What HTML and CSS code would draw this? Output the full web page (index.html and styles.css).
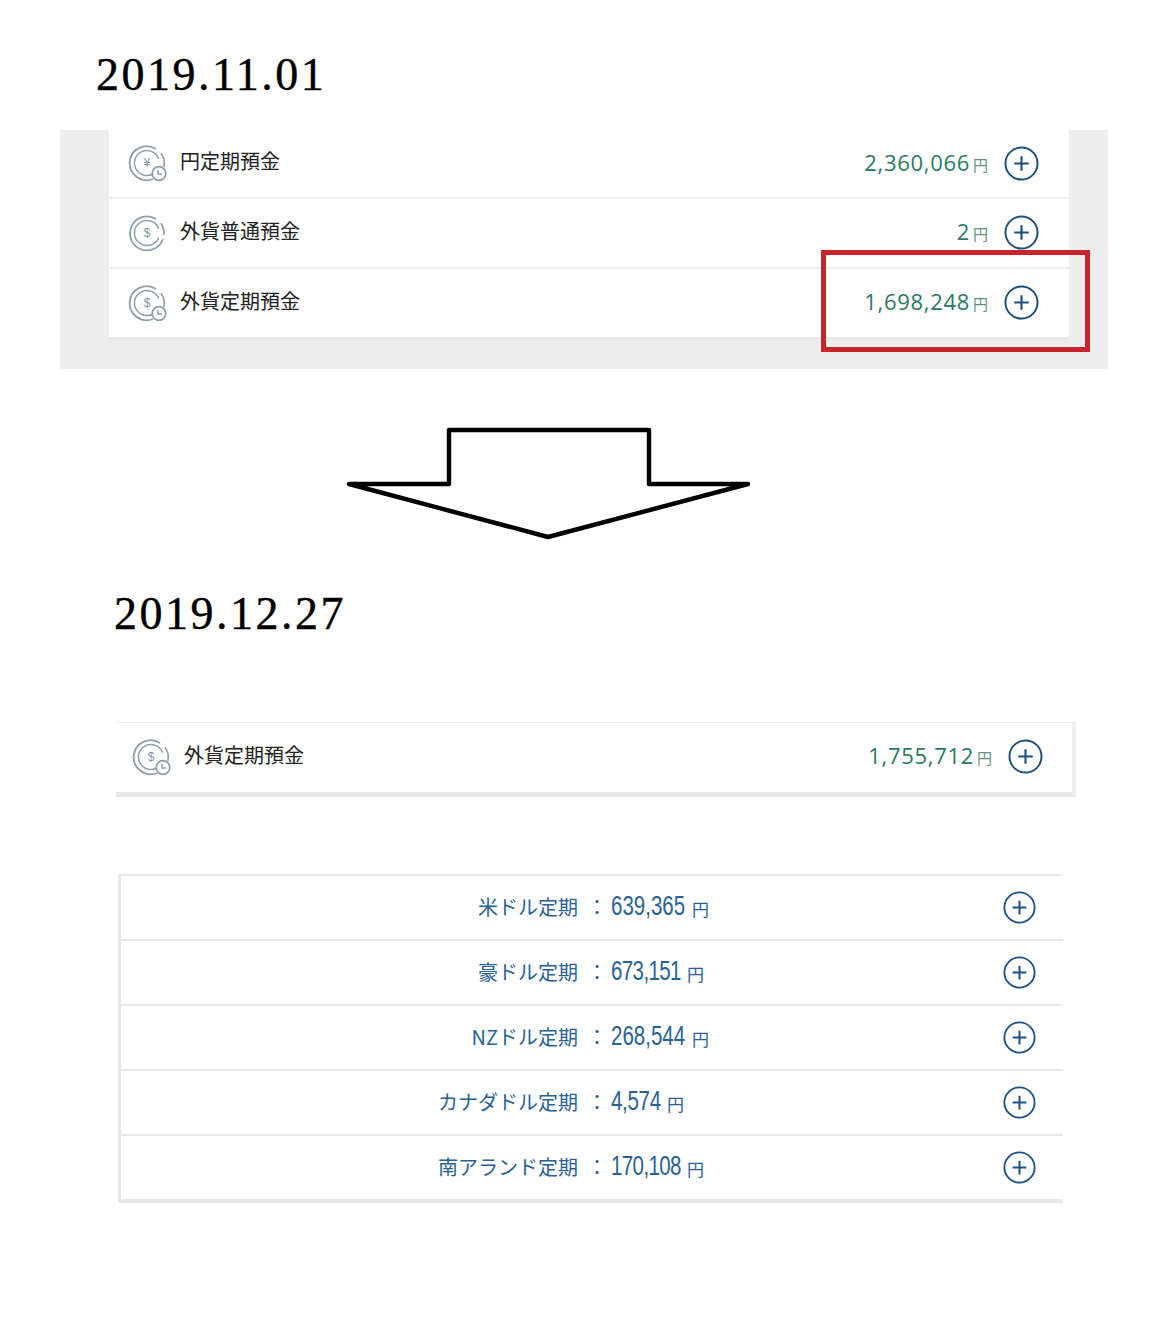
FILE: index.html
```html
<!DOCTYPE html>
<html lang="ja">
<head>
    <meta charset="UTF-8">
    <meta name="viewport" content="width=device-width, initial-scale=1.0">
    <title>外貨定期預金</title>
    <link rel="stylesheet" href="styles.css">
</head>
<body>

<svg class="icon-defs" width="0" height="0">
    <symbol id="coin" viewBox="0 0 40 40">
        <path d="M28 6A17 17 0 1 0 35 26" fill="none" stroke="currentColor" stroke-width="1.8"/>
        <path d="M30.700 15.700A12.500 12.500 0 1 0 30.700 24.300" fill="none" stroke="currentColor" stroke-width="1.5"/>
        <path d="M32.900 10.200A17 17 0 0 1 35.900 22" fill="none" stroke="currentColor" stroke-width="1.6"/>
    </symbol>
    <symbol id="coin-clock" viewBox="0 0 40 40">
        <path d="M28 6A17 17 0 1 0 25 36" fill="none" stroke="currentColor" stroke-width="1.8"/>
        <path d="M30.700 15.700A12.500 12.500 0 1 0 27 29.600" fill="none" stroke="currentColor" stroke-width="1.5"/>
        <path d="M32.900 10.200A17 17 0 0 1 35.900 24" fill="none" stroke="currentColor" stroke-width="1.6"/>
        <circle cx="31" cy="30.500" r="6.800" fill="#fff" stroke="currentColor" stroke-width="1.8"/>
        <path d="M30 27V31H34" fill="none" stroke="currentColor" stroke-width="1.4"/>
    </symbol>
    <symbol id="plus" viewBox="0 0 36 36">
        <circle cx="18" cy="18" r="16.500" fill="none" stroke="currentColor" stroke-width="2"/>
        <path d="M10.500 18H25.500M18 10.500V25.500" fill="none" stroke="currentColor" stroke-width="2.200"/>
    </symbol>
</svg>

<h1 class="date-title first">2019.11.01</h1>

<div class="gray-panel">
    <div class="account-card">
        <div class="account-row">
            <svg class="coin-icon"><use href="#coin-clock"/><text x="19" y="24">¥</text></svg>
            <span class="account-name">円定期預金</span>
            <span class="amount">2,360,066</span><span class="yen">円</span>
            <svg class="plus-btn"><use href="#plus"/></svg>
        </div>
        <div class="account-row">
            <svg class="coin-icon"><use href="#coin"/><text x="19" y="24">$</text></svg>
            <span class="account-name">外貨普通預金</span>
            <span class="amount">2</span><span class="yen">円</span>
            <svg class="plus-btn"><use href="#plus"/></svg>
        </div>
        <div class="account-row">
            <svg class="coin-icon"><use href="#coin-clock"/><text x="19" y="24">$</text></svg>
            <span class="account-name">外貨定期預金</span>
            <span class="amount">1,698,248</span><span class="yen">円</span>
            <svg class="plus-btn"><use href="#plus"/></svg>
        </div>
    </div>
    <div class="red-box"></div>
</div>

<svg class="down-arrow" width="420" height="125" viewBox="0 0 420 125">
    <path d="M9 64H109V10H309V64H408L208 117Z" fill="none" stroke="#000" stroke-width="4.400" stroke-linejoin="round"/>
</svg>

<h1 class="date-title second">2019.12.27</h1>

<div class="account-card single">
    <div class="account-row">
        <svg class="coin-icon"><use href="#coin-clock"/><text x="19" y="24">$</text></svg>
        <span class="account-name">外貨定期預金</span>
        <span class="amount">1,755,712</span><span class="yen">円</span>
        <svg class="plus-btn"><use href="#plus"/></svg>
    </div>
</div>

<div class="detail-list">
    <div class="detail-row">
        <span class="detail-name">米ドル定期</span><span class="colon">：</span>
        <span class="detail-value">639,365</span><span class="detail-yen">円</span>
        <svg class="plus-btn"><use href="#plus"/></svg>
    </div>
    <div class="detail-row">
        <span class="detail-name">豪ドル定期</span><span class="colon">：</span>
        <span class="detail-value tight">673,151</span><span class="detail-yen">円</span>
        <svg class="plus-btn"><use href="#plus"/></svg>
    </div>
    <div class="detail-row">
        <span class="detail-name">NZドル定期</span><span class="colon">：</span>
        <span class="detail-value">268,544</span><span class="detail-yen">円</span>
        <svg class="plus-btn"><use href="#plus"/></svg>
    </div>
    <div class="detail-row">
        <span class="detail-name">カナダドル定期</span><span class="colon">：</span>
        <span class="detail-value short">4,574</span><span class="detail-yen">円</span>
        <svg class="plus-btn"><use href="#plus"/></svg>
    </div>
    <div class="detail-row">
        <span class="detail-name">南アランド定期</span><span class="colon">：</span>
        <span class="detail-value tight">170,108</span><span class="detail-yen">円</span>
        <svg class="plus-btn"><use href="#plus"/></svg>
    </div>
</div>

</body>
</html>
```
FILE: styles.css
```css
body {
    margin: 0;
    height: 1332px;
    overflow: hidden;
    background-color: #fff;
    font-family: "Noto Sans CJK JP", "Liberation Sans", sans-serif;
}
.icon-defs {
    display: block;
    height: 0;
}
.date-title {
    margin: 0;
    height: 60px;
    font-family: "Liberation Serif", serif;
    font-weight: normal;
    font-size: 46px;
    line-height: 60px;
    letter-spacing: 2.500px;
    -webkit-text-stroke: 0.4px #000;
    color: #000;
}
.date-title.first {
    margin: 45px 0 25px 96px;
}
.date-title.second {
    margin: 39px 0 0 114px;
}
.gray-panel {
    position: relative;
    margin-left: 60px;
    width: 1048px;
    height: 239px;
    background-color: #eee;
}
.account-card {
    position: relative;
    left: 49px;
    width: 960px;
    background-color: #fff;
    box-shadow: 0 3px 0 #e9e9e9;
}
.account-row {
    display: flex;
    align-items: center;
    box-sizing: border-box;
    height: 69px;
    padding: 0 30px 1px 19px;
    border-bottom: 2px solid #eee;
}
.account-row + .account-row {
    height: 70px;
}
.account-row:last-child {
    border-bottom: none;
    height: 68px;
}
.coin-icon {
    width: 40px;
    height: 40px;
    color: #8f9fab;
}
.coin-icon text {
    font-family: "Liberation Sans", sans-serif;
    font-size: 12px;
    fill: #84949f;
    text-anchor: middle;
}
.account-name {
    margin: 0 0 5px 12px;
    font-size: 20px;
    color: #222;
}
.amount {
    margin: 0 0 3px auto;
    font-family: "Open Sans", sans-serif;
    font-weight: 500;
    font-size: 22px;
    letter-spacing: 0.700px;
    color: #2a7a63;
}
.yen {
    margin: 2px 16px 0 3px;
    font-size: 15px;
    color: #5f9484;
}
.plus-btn {
    width: 35px;
    height: 35px;
    color: #1d4f7c;
}
.red-box {
    position: absolute;
    left: 761px;
    top: 120px;
    box-sizing: border-box;
    width: 269px;
    height: 102px;
    border: 5px solid #c8242c;
}
.down-arrow {
    display: block;
    margin: 51px 0 0 340px;
}
.account-card.single {
    left: 116px;
    box-sizing: border-box;
    margin-top: 78px;
    height: 75px;
    border-top: 1px solid #eee;
    border-right: 4px solid #eee;
    border-bottom: 5px solid #e9e9e9;
    box-shadow: none;
}
.account-card.single .account-row {
    height: 69px;
    padding: 0 29px 2px 16px;
}
.detail-list {
    box-sizing: border-box;
    margin: 77px 0 0 118px;
    width: 945px;
    border-left: 3px solid #e8e8e8;
    border-top: 2px solid #e8e8e8;
}
.detail-row {
    display: flex;
    align-items: center;
    box-sizing: border-box;
    height: 65px;
    padding-right: 27px;
    border-bottom: 2px solid #e8e8e8;
}
.detail-row:last-child {
    height: 67px;
    border-bottom-width: 4px;
}
.detail-name {
    width: 457px;
    margin-bottom: 2px;
    text-align: right;
    font-size: 20px;
    color: #2a6298;
}
.colon {
    width: 20px;
    margin: 0 4px 2px 9px;
    font-size: 20px;
    color: #2a6298;
}
/* no narrow face is installed, so squeeze the digits; the negative margin takes back the width */
.detail-value {
    display: inline-block;
    margin: 0 -22.700px 3px 0;
    transform: scaleX(0.76);
    transform-origin: left center;
    font-family: "Liberation Sans", sans-serif;
    font-size: 27px;
    color: #2a6298;
}
.detail-value.tight {
    margin-right: -22.100px;
    letter-spacing: -0.800px;
}
.detail-value.short {
    margin-right: -15.700px;
    letter-spacing: -0.400px;
}
.detail-yen {
    margin: 1px auto 0 6px;
    font-size: 17px;
    color: #2a6298;
}
.detail-row .plus-btn {
    width: 33px;
    height: 33px;
    color: #1d5288;
}
```
